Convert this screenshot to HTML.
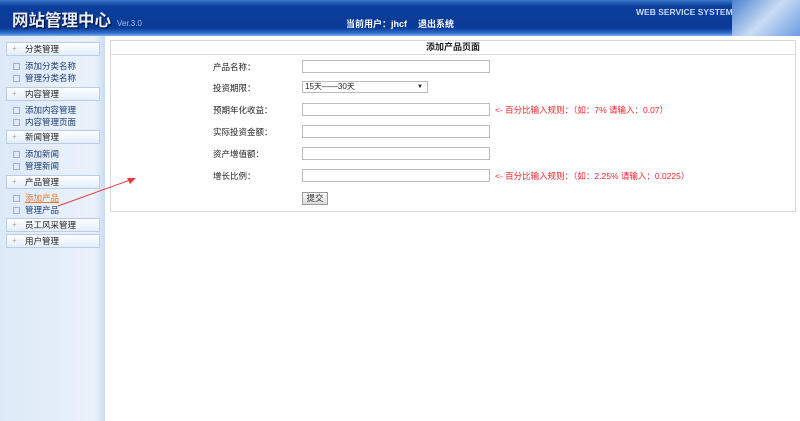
<!DOCTYPE html>
<html><head><meta charset="utf-8"><style>
*{margin:0;padding:0;box-sizing:border-box}
body{width:800px;height:421px;overflow:hidden;background:#fff;font-family:"Liberation Sans","Noto Sans CJK SC",sans-serif;font-size:9px;color:#333;position:relative}
.hd{position:absolute;left:0;top:0;width:800px;height:36px;background:linear-gradient(#3a78c8 0,#0b3f9c 6px,#0a3a95 28px,#2c6fd0 33px,#7fb0e8 36px)}
.hd .t{position:absolute;left:12px;top:7px;color:#e8eef8;font-size:16.5px;font-weight:bold;text-shadow:1px 1px 1px #002}
.hd .v{position:absolute;left:117px;top:19px;color:#9fc0ea;font-size:8px}
.hd .u{position:absolute;top:17px;color:#fff;font-weight:bold;font-size:9px}
.hd .ws{position:absolute;left:636px;top:7px;color:#c8d8f0;font-weight:bold;font-size:8.5px}
.hd .img{position:absolute;right:0;top:0;width:68px;height:36px;background:linear-gradient(135deg,#4d82d0,#c9dcf5 50%,#6e9ce0)}
.sb{position:absolute;left:0;top:36px;width:105px;height:385px;background:linear-gradient(90deg,#dde9f7,#eaf2fb 90%,#c9dcf2)}
.bx{position:absolute;left:6px;width:94px;height:14px;background:linear-gradient(#fff,#e3edf8);border:1px solid #b8cde6;padding-left:18px;font-size:8.5px;line-height:12px;color:#222}
.bx:before{content:"+";position:absolute;left:5px;color:#9ab;font-size:8px}
.lk{position:absolute;left:25px;font-size:8.5px;color:#1d3d6e}
.lk:before{content:"";position:absolute;left:-12px;top:3px;width:5px;height:5px;border:1px solid #aac}
.ct{position:absolute;left:110px;top:40px;width:686px;height:172px;border:1px solid #d8d8d8}
.ct .tt{height:14px;border-bottom:1px solid #ddd;text-align:center;font-weight:bold;font-size:9px;line-height:13px;color:#222}
.lb{position:absolute;left:213px;font-size:8.5px;color:#222}
.in{position:absolute;left:302px;width:188px;height:13px;border:1px solid #bbb;background:#fff}
.tip{position:absolute;left:495px;color:#f0232b;font-size:8.5px}
</style></head><body>
<div class="hd">
<div class="t">网站管理中心</div><div class="v">Ver.3.0</div>
<div class="u" style="left:346px">当前用户：jhcf</div>
<div class="u" style="left:418px">退出系统</div>
<div class="ws">WEB SERVICE SYSTEM</div>
<div class="img"></div>
</div>
<div class="sb">
<div class="bx" style="top:6px">分类管理</div>
<div class="lk" style="top:24px">添加分类名称</div>
<div class="lk" style="top:36px">管理分类名称</div>
<div class="bx" style="top:51px">内容管理</div>
<div class="lk" style="top:68px">添加内容管理</div>
<div class="lk" style="top:80px">内容管理页面</div>
<div class="bx" style="top:94px">新闻管理</div>
<div class="lk" style="top:112px">添加新闻</div>
<div class="lk" style="top:124px">管理新闻</div>
<div class="bx" style="top:139px">产品管理</div>
<div class="lk" style="top:156px;color:#e8792a;text-decoration:underline">添加产品</div>
<div class="lk" style="top:168px">管理产品</div>
<div class="bx" style="top:182px">员工风采管理</div>
<div class="bx" style="top:198px">用户管理</div>
</div>
<div class="ct"><div class="tt">添加产品页面</div></div>
<div class="lb" style="top:61px">产品名称：</div><div class="in" style="top:60px"></div>
<div class="lb" style="top:82px">投资期限：</div>
<div class="in" style="top:81px;width:126px;height:12px;font-size:8px;line-height:10px;padding-left:2px;color:#222">15天——30天<span style="position:absolute;right:4px;font-size:6px">▼</span></div>
<div class="lb" style="top:104px">预期年化收益：</div><div class="in" style="top:103px"></div>
<div class="tip" style="top:104px">&lt;- 百分比输入规则：（如：7% 请输入：0.07）</div>
<div class="lb" style="top:126px">实际投资金额：</div><div class="in" style="top:125px"></div>
<div class="lb" style="top:148px">资产增值额：</div><div class="in" style="top:147px"></div>
<div class="lb" style="top:170px">增长比例：</div><div class="in" style="top:169px"></div>
<div class="tip" style="top:170px">&lt;- 百分比输入规则：（如：2.25% 请输入：0.0225）</div>
<div style="position:absolute;left:302px;top:192px;width:26px;height:13px;border:1px solid #999;background:linear-gradient(#fafafa,#ddd);font-size:8.5px;text-align:center;line-height:11px">提交</div>
<svg style="position:absolute;left:0;top:0" width="800" height="421"><line x1="58" y1="206" x2="130" y2="180" stroke="#e83a3a" stroke-width="1"/><polygon points="136,178 127,178 130,184" fill="#e83a3a"/></svg>
</body></html>
